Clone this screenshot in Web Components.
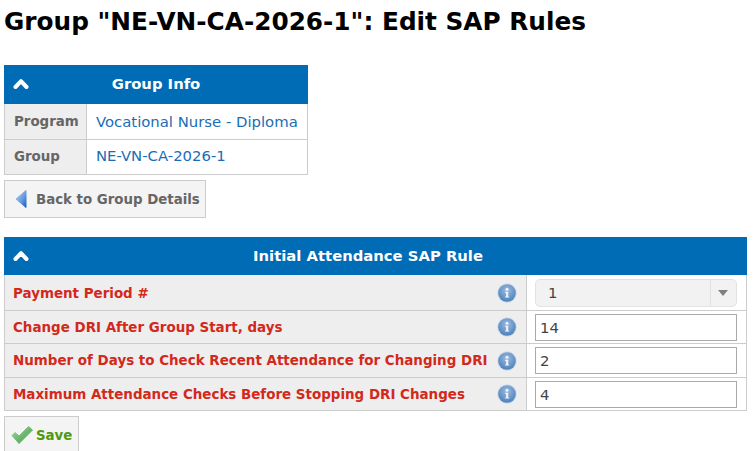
<!DOCTYPE html>
<html>
<head>
<meta charset="utf-8">
<style>
  html, body { margin: 0; padding: 0; background: #fff; overflow: hidden; height: 451px; }
  body { font-family: "DejaVu Sans", Verdana, sans-serif; font-size: 13px; color: #333; }
</style>
</head>
<body>
<page-title>Group "NE-VN-CA-2026-1": Edit SAP Rules</page-title>

<info-panel heading="Group Info" style="width:304px;margin-top:18px">
  <info-row label="Program" label-width="82" h="36">Vocational Nurse - Diploma</info-row>
  <info-row label="Group" label-width="82" h="35" lift>NE-VN-CA-2026-1</info-row>
</info-panel>

<action-button icon="back" style="margin-top:5px;height:38px">Back to Group Details</action-button>

<info-panel heading="Initial Attendance SAP Rule" shift="15" head-h="38" style="width:743px;margin-top:19px">
  <rule-row label="Payment Period #" h="36" drop><combo-field value="1"></combo-field></rule-row>
  <rule-row label="Change DRI After Group Start, days" h="33"><text-field value="14"></text-field></rule-row>
  <rule-row label="Number of Days to Check Recent Attendance for Changing DRI" h="34"><text-field value="2"></text-field></rule-row>
  <rule-row label="Maximum Attendance Checks Before Stopping DRI Changes" h="33"><text-field value="4"></text-field></rule-row>
</info-panel>

<action-button icon="save" color="#4f9a0e" style="margin-top:5px;height:38px">Save</action-button>

<script>
class PageTitle extends HTMLElement {
  constructor() {
    super();
    this.attachShadow({ mode: 'open' });
    this.shadowRoot.innerHTML = `
      <style>
        :host { display: block; padding: 8px 0 0 4px; height: 47px; box-sizing: border-box; }
        h1 { margin: 0; font: bold 24.75px/28px "DejaVu Sans", Verdana, sans-serif; color: #000; white-space: nowrap; }
      </style>
      <h1><slot></slot></h1>`;
  }
}

class InfoPanel extends HTMLElement {
  constructor() {
    super();
    this.attachShadow({ mode: 'open' });
  }
  connectedCallback() {
    this.shadowRoot.innerHTML = `
      <style>
        :host { display: block; margin-left: 4px; }
        .head {
          height: ${this.getAttribute('head-h') || 39}px; background: #006cb5; color: #fff; position: relative;
          display: flex; align-items: center; justify-content: center;
          font-weight: bold; font-size: 14.8px; box-sizing: border-box;
          padding: 0 ${this.getAttribute('shift') || 0}px 2px 0;
        }
        .head svg { position: absolute; left: 9px; top: 13px; }
      </style>
      <div class="head">
        <svg width="16" height="12" viewBox="0 0 16 12"><path d="M2.5 9 8 3.2 13.5 9" fill="none" stroke="#fff" stroke-width="4" stroke-linejoin="round" stroke-linecap="round"/></svg>
        <span>${this.getAttribute('heading')}</span>
      </div>
      <slot></slot>`;
  }
}

class InfoRow extends HTMLElement {
  constructor() {
    super();
    this.attachShadow({ mode: 'open' });
  }
  connectedCallback() {
    const w = this.getAttribute('label-width');
    const lift = this.hasAttribute('lift') ? 2 : 0;
    this.shadowRoot.innerHTML = `
      <style>
        :host { display: flex; height: ${this.getAttribute('h')}px; box-sizing: border-box; border: 1px solid #ccc; border-top: 0; }
        .lab { width: ${w}px; background: #eee; color: #666; font-weight: bold; border-right: 1px solid #ccc;
               padding: 0 0 ${lift}px 9px; box-sizing: border-box; display: flex; align-items: center; font-size: 13.4px; }
        .val { flex: 1; padding: 0 0 ${lift}px 9px; display: flex; align-items: center; color: #1a6db5; font-size: 14.85px; white-space: nowrap; }
      </style>
      <div class="lab">${this.getAttribute('label')}</div>
      <div class="val"><slot></slot></div>`;
  }
}

class RuleRow extends HTMLElement {
  constructor() {
    super();
    this.attachShadow({ mode: 'open' });
  }
  connectedCallback() {
    const drop = this.hasAttribute('drop') ? 2 : 0;
    this.shadowRoot.innerHTML = `
      <style>
        :host { display: flex; height: ${this.getAttribute('h')}px; box-sizing: border-box; border: 1px solid #ccc; border-top: 0; }
        .lab { width: 522px; background: #eee; color: #d2291b; font-weight: bold; font-size: 13.45px;
               border-right: 1px solid #ccc; padding: 0 9px 0 8px; box-sizing: border-box;
               display: flex; align-items: center; justify-content: space-between; white-space: nowrap; }
        .lab span { padding-top: ${drop}px; }
        .val { flex: 1; padding: 0 9px 0 8px; display: flex; align-items: center; }
        ::slotted(*) { flex: 1; }
      </style>
      <div class="lab">
        <span>${this.getAttribute('label')}</span>
        <svg width="20" height="20" viewBox="0 0 20 20">
          <defs><radialGradient id="g" cx="50%" cy="35%" r="65%"><stop offset="0" stop-color="#9dbce0"/><stop offset="1" stop-color="#4a80bb"/></radialGradient></defs>
          <circle cx="10" cy="10" r="9.8" fill="#cfdbe8"/>
          <circle cx="10" cy="10" r="8.8" fill="url(#g)"/>
          <circle cx="10" cy="6.2" r="1.5" fill="#eef3f9"/>
          <path d="M8.2 8.8h3v4.6h1v1.2H8v-1.2h1.1V10H8.2z" fill="#eef3f9"/>
        </svg>
      </div>
      <div class="val"><slot></slot></div>`;
  }
}

class TextField extends HTMLElement {
  constructor() {
    super();
    this.attachShadow({ mode: 'open' });
  }
  connectedCallback() {
    this.shadowRoot.innerHTML = `
      <style>
        :host { display: block; }
        .box { height: 27px; box-sizing: border-box; border: 1px solid #aaa; background: #fff;
               padding-left: 4px; font-size: 14.8px; color: #444; display: flex; align-items: center; }
      </style>
      <div class="box">${this.getAttribute('value')}</div>`;
  }
}

class ComboField extends HTMLElement {
  constructor() {
    super();
    this.attachShadow({ mode: 'open' });
  }
  connectedCallback() {
    this.shadowRoot.innerHTML = `
      <style>
        :host { display: block; }
        .box { height: 28px; box-sizing: border-box; border: 1px solid #e2e2e2; border-radius: 5px; background: #f2f2f2;
               font-size: 14.8px; color: #444; display: flex; align-items: center; }
        .txt { flex: 1; padding-left: 12px; }
        .arr { width: 25px; height: 100%; border-left: 1px solid #e2e2e2; display: flex; align-items: center; justify-content: center; }
      </style>
      <div class="box">
        <span class="txt">${this.getAttribute('value')}</span>
        <span class="arr"><svg width="11" height="6" viewBox="0 0 11 6"><path d="M0 0h10L5 6z" fill="#808080"/></svg></span>
      </div>`;
  }
}

class ActionButton extends HTMLElement {
  constructor() {
    super();
    this.attachShadow({ mode: 'open' });
  }
  connectedCallback() {
    const icons = {
      back: `<svg width="12" height="18" viewBox="0 0 12 18"><defs><linearGradient id="b" x1="0" y1="0" x2="1" y2="1"><stop offset="0" stop-color="#b4cff0"/><stop offset=".55" stop-color="#6a9ee0"/><stop offset="1" stop-color="#1f5fc0"/></linearGradient></defs><path d="M11 .5v17L1 9z" fill="url(#b)" stroke="url(#b)" stroke-linejoin="round"/></svg>`,
      save: `<svg width="22" height="18" viewBox="0 0 22 18"><defs><linearGradient id="c" x1="0" y1="0" x2="1" y2="1"><stop offset="0" stop-color="#a4d69a"/><stop offset="1" stop-color="#3f9a4a"/></linearGradient></defs><path d="M1 9.5l3-3L8 10l9.5-9.5 4 3.5L8 17.5z" fill="url(#c)" stroke="url(#c)" stroke-linejoin="round"/></svg>`
    };
    const kind = this.getAttribute('icon');
    this.shadowRoot.innerHTML = `
      <style>
        :host { display: table; margin-left: 4px; box-sizing: border-box; border: 1px solid #ccc; background: #f4f4f4; }
        .in { height: 100%; display: flex; align-items: center; gap: ${kind === 'back' ? 9 : 3}px; padding: 0 ${kind === 'back' ? 5 : 6}px 0 ${kind === 'back' ? 10 : 6}px;
              font-weight: bold; font-size: 13.35px; color: ${this.getAttribute('color') || '#666'}; white-space: nowrap; }
      </style>
      <div class="in">${icons[kind]}<slot></slot></div>`;
  }
}

customElements.define('page-title', PageTitle);
customElements.define('info-panel', InfoPanel);
customElements.define('info-row', InfoRow);
customElements.define('rule-row', RuleRow);
customElements.define('text-field', TextField);
customElements.define('combo-field', ComboField);
customElements.define('action-button', ActionButton);
</script>
</body>
</html>
